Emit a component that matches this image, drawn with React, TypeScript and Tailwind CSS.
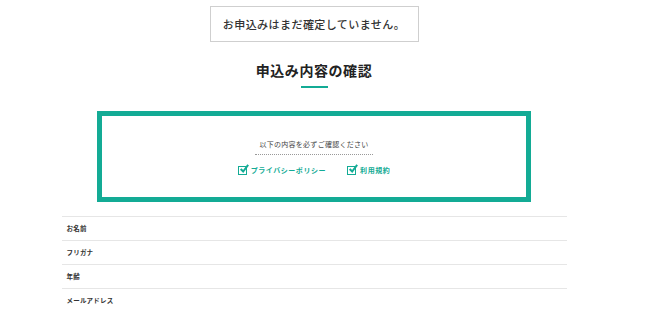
import React from "react";

const JP = "font-['Noto_Sans_CJK_JP','Noto_Sans',sans-serif]";

function CheckItem({ label }: { label: string }) {
  return (
    <label className="flex items-center gap-[4px]">
      <span className="relative w-[9px] h-[9px] border-[1.5px] border-[#13ab95] bg-white">
        <svg viewBox="0 0 12 12" className="absolute left-[0px] top-[-3px] w-[10px] h-[10px]">
          <path d="M2 6 L5 9 L11 1" fill="none" stroke="#13ab95" strokeWidth="2.4" />
        </svg>
      </span>
      <span className="text-[7px] font-bold text-[#13ab95] tracking-[0.08em] leading-none">{label}</span>
    </label>
  );
}

export default function App() {
  const rows = ["お名前", "フリガナ", "年齢", "メールアドレス"];
  return (
    <div className={`w-[650px] h-[310px] bg-white overflow-hidden ${JP}`}>
      <div className="w-[628px] flex flex-col items-center">
        {/* Notice */}
        <div className="mt-[6px] w-[209px] h-[36px] border border-[#cfcfcf] flex items-center justify-center">
          <p className="text-[11px] font-medium text-[#333] tracking-[0.04em] leading-none">
            お申込みはまだ確定していません。
          </p>
        </div>

        {/* Title */}
        <h1 className="mt-[21px] text-[14px] font-bold text-[#222] tracking-[0.04em] leading-none">
          申込み内容の確認
        </h1>
        <div className="mt-[9px] w-[27px] h-[2px] bg-[#13ab95]" />

        {/* Confirm box */}
        <div className="mt-[23px] w-[434px] h-[91px] border-[5px] border-[#13ab95] flex flex-col items-center">
          <p className="mt-[25px] text-[7px] text-[#444] tracking-[0.04em] leading-none pb-[6px] border-b border-dotted border-[#999] px-[4px]">
            以下の内容を必ずご確認ください
          </p>
          <div className="mt-[11px] flex items-center gap-[21px]">
            <CheckItem label="プライバシーポリシー" />
            <CheckItem label="利用規約" />
          </div>
        </div>

        {/* Rows */}
        <div className="mt-[14px] w-[505px] border-t border-[#e6e6e6]">
          {rows.map((r) => (
            <div key={r} className="h-[24px] border-b border-[#e6e6e6] flex items-center pl-[5px]">
              <span className="text-[6.5px] font-bold text-[#333] tracking-[0.03em] leading-none">{r}</span>
            </div>
          ))}
        </div>
      </div>
    </div>
  );
}
